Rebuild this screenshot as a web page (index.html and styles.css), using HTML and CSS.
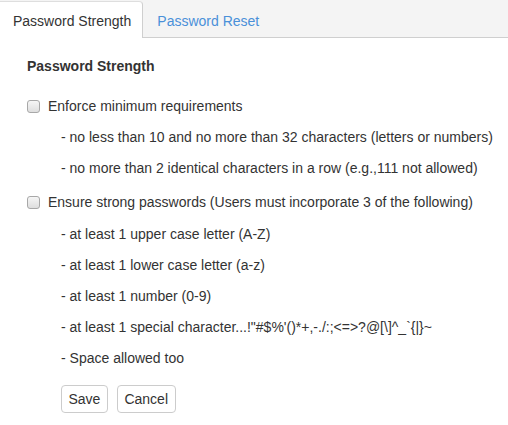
FILE: index.html
```html
<!DOCTYPE html>
<html>
<head>
<meta charset="utf-8">
<link rel="stylesheet" href="styles.css">
</head>
<body>
<div class="tabs">
  <div class="tab active">Password Strength</div>
  <div class="tab">Password Reset</div>
</div>
<div class="content">
  <h4 class="heading">Password Strength</h4>
  <div class="group">
    <label class="check"><input type="checkbox"><span>Enforce minimum requirements</span></label>
    <div class="item">- no less than 10 and no more than 32 characters (letters or numbers)</div>
    <div class="item">- no more than 2 identical characters in a row (e.g.,111 not allowed)</div>
  </div>
  <div class="group second">
    <label class="check"><input type="checkbox"><span>Ensure strong passwords (Users must incorporate 3 of the following)</span></label>
    <div class="item">- at least 1 upper case letter (A-Z)</div>
    <div class="item">- at least 1 lower case letter (a-z)</div>
    <div class="item">- at least 1 number (0-9)</div>
    <div class="item">- at least 1 special character...!"#$%'()*+,-./:;&lt;=&gt;?@[\]^_`{|}~</div>
    <div class="item">- Space allowed too</div>
  </div>
  <div class="buttons">
    <button class="btn">Save</button>
    <button class="btn">Cancel</button>
  </div>
</div>
</body>
</html>
```
FILE: styles.css
```css
html, body {
  margin: 0;
  padding: 0;
  background: #fff;
}
body {
  font-family: "Liberation Sans", Arial, sans-serif;
  font-size: 14px;
  line-height: 20px;
  color: #333;
}
.tabs {
  display: flex;
  align-items: flex-start;
  height: 37px;
  background: #f4f4f4;
  border-bottom: 1px solid #cfcfcf;
}
.tab {
  margin-top: 1px;
  border-top: 1px solid transparent;
  padding: 9px 14px 7px 14px;
  color: #4a90d9;
}
.tab.active {
  background: #fff;
  color: #333;
  border-top: 1px solid #dedede;
  border-right: 1px solid #cfcfcf;
  border-top-right-radius: 4px;
  padding: 9px 11px 7px 13px;
  margin-bottom: -1px;
}
.content {
  padding: 18px 0 0 27px;
}
.heading {
  margin: 0 0 20px 0;
  font-size: 14px;
  line-height: 20px;
  font-weight: bold;
}
.group {
  display: flex;
  flex-direction: column;
  gap: 11px;
}
.group.second {
  margin-top: 14px;
}
.group.second .check {
  margin-bottom: 1px;
}
.check {
  display: flex;
  align-items: center;
  height: 20px;
}
.check input {
  appearance: none;
  -webkit-appearance: none;
  width: 13px;
  height: 13px;
  margin: 0 8px 0 0;
  border: 1px solid #a8a8a8;
  border-radius: 3px;
  background: linear-gradient(#f6f6f6, #dedede);
  flex: none;
}
.item {
  padding-left: 34px;
  white-space: nowrap;
}
.buttons {
  display: flex;
  gap: 9px;
  margin: 17px 0 0 34px;
}
.btn {
  font-family: "Liberation Sans", Arial, sans-serif;
  font-size: 14px;
  line-height: 20px;
  color: #333;
  background: #fff;
  border: 1px solid #ccc;
  border-radius: 4px;
  padding: 3px 6.5px;
  margin: 0;
}
```
